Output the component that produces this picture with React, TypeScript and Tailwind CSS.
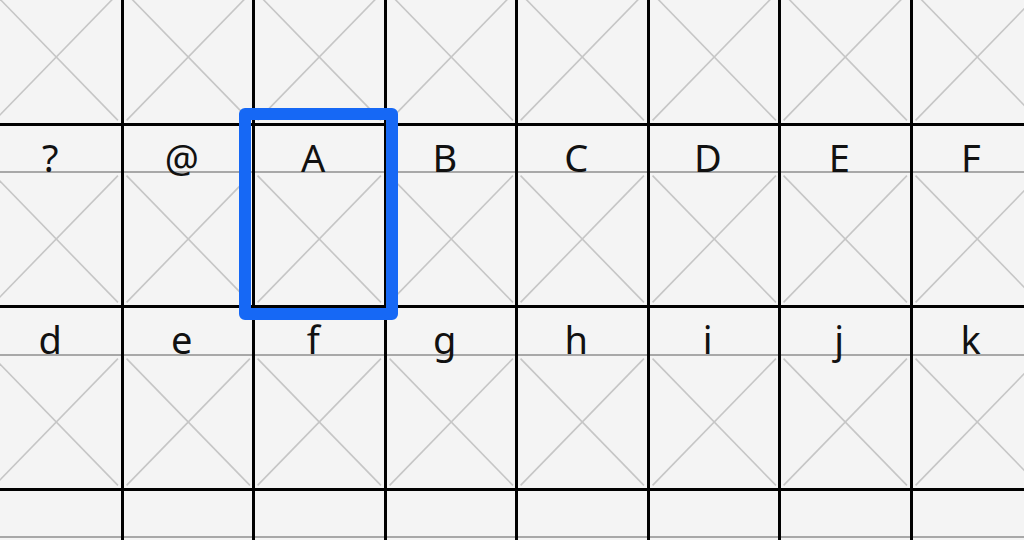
const ROWS: string[][] = [
  ['', '', '', '', '', '', '', '', ''],
  ['?', '@', 'A', 'B', 'C', 'D', 'E', 'F', ''],
  ['d', 'e', 'f', 'g', 'h', 'i', 'j', 'k', ''],
  ['', '', '', '', '', '', '', '', ''],
]

function Cross() {
  return (
    <svg className="h-full w-full" viewBox="0 0 100 100" preserveAspectRatio="none">
      <line x1="2" y1="2" x2="98" y2="98" stroke="#c6c6c6" strokeWidth="1.6" vectorEffect="non-scaling-stroke" />
      <line x1="98" y1="2" x2="2" y2="98" stroke="#c6c6c6" strokeWidth="1.6" vectorEffect="non-scaling-stroke" />
    </svg>
  )
}

function Cell({ ch }: { ch: string }) {
  return (
    <div className="flex flex-col border-l-[3px] border-t-[3px] border-black">
      <div className="relative z-10 flex h-[45.5px] items-end justify-center pr-3">
        <span className="relative top-[4.5px] text-[38px] leading-none text-[#111]">{ch}</span>
      </div>
      <div className="h-[2px] bg-[#a8a8a8]" />
      <div className="flex-1">
        <Cross />
      </div>
    </div>
  )
}

export default function App() {
  return (
    <div
      className="relative h-[540px] w-[1024px] overflow-hidden bg-[#f4f4f4]"
      style={{ fontFamily: '"Noto Sans", "Open Sans", sans-serif' }}
    >
      <div className="-ml-[11px] -mt-[60px] grid grid-cols-[repeat(9,131.5px)] grid-rows-[repeat(4,182.5px)]">
        {ROWS.flatMap((row, r) => row.map((ch, c) => <Cell key={`${r}-${c}`} ch={ch} />))}
      </div>
      {/* selection */}
      <div className="absolute left-[239px] top-[108px] h-[212px] w-[159px] rounded-[6px] border-[12px] border-[#1668f5]" />
    </div>
  )
}
